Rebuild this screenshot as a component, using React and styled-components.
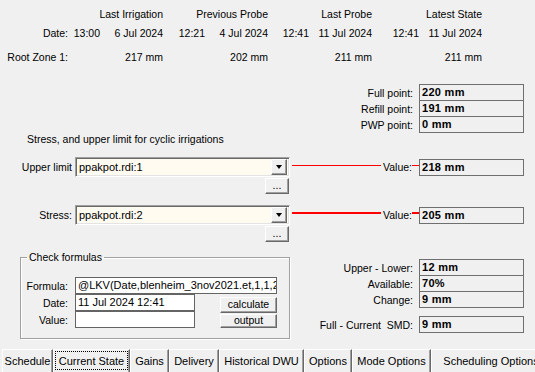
import styled, { createGlobalStyle } from "styled-components";

const GlobalStyle = createGlobalStyle`
  html, body { margin: 0; padding: 0; background: #f0f0f0; }
  body { font-family: "Liberation Sans", Arial, sans-serif; font-size: 10.5px; color: #000; }
`;

const Window = styled.div`
  width: 535px;
  height: 372px;
  overflow: hidden;
  background: #f0f0f0;
  display: flex;
  flex-direction: column;
  font-family: "Liberation Sans", Arial, sans-serif;
  font-size: 10.5px;
  color: #000;
`;

const StatusGrid = styled.div`
  display: grid;
  grid-template-columns: 68px 95px 105px 104px 110px;
  grid-template-rows: 19px 24px 13px;
  margin-top: 8px;
  line-height: 13px;
  white-space: nowrap;
`;

const Cell = styled.div`
  text-align: right;
`;

const DateCell = styled.div`
  display: flex;
  justify-content: flex-end;
`;

const DatePart = styled.span`
  width: 63px;
  text-align: right;
`;

const PointList = styled.div`
  display: flex;
  flex-direction: column;
  align-items: flex-end;
  padding-right: 11px;
  margin-top: ${(p) => p.$top || 0}px;
`;

const PointRow = styled.div`
  display: flex;
  align-items: center;
  gap: 6px;
  margin-top: ${(p) => p.$gap ?? -1}px;
  &:first-child { margin-top: 0; }
`;

const ValueBox = styled.div`
  width: 105px;
  height: 17px;
  box-sizing: border-box;
  border: 1px solid #6f6f6f;
  font-weight: bold;
  font-size: 11px;
  letter-spacing: 0.3px;
  line-height: 15px;
  padding-left: 2px;
  white-space: nowrap;
`;

const Heading = styled.div`
  margin: -1px 0 0 27px;
  line-height: 14px;
`;

const LimitRow = styled.div`
  display: flex;
  align-items: center;
  height: 20px;
  margin-top: 11px;
`;

const RowLabel = styled.div`
  width: 72px;
  padding-right: 3px;
  text-align: right;
  white-space: nowrap;
`;

const Combo = styled.div`
  width: 215px;
  height: 20px;
  box-sizing: border-box;
  display: flex;
  align-items: center;
  background: #fffbf0;
  border-top: 1px solid #a0a0a0;
  border-left: 1px solid #a0a0a0;
  border-bottom: 1px solid #fff;
  border-right: 1px solid #fff;
  box-shadow: inset 1px 1px 0 #696969, inset -1px -1px 0 #e3e3e3;
  padding: 1px 2px 1px 1px;
`;

const ComboText = styled.span`
  flex: 1;
  padding-left: 2px;
  font-size: 11px;
  line-height: 16px;
`;

const ComboArrow = styled.div`
  width: 16px;
  height: 16px;
  box-sizing: border-box;
  background: #f0f0f0;
  border: 1px solid;
  border-color: #fff #696969 #696969 #fff;
  box-shadow: inset -1px -1px 0 #a0a0a0;
  display: flex;
  align-items: center;
  justify-content: center;
  &::before {
    content: "";
    border-left: 3.5px solid transparent;
    border-right: 3.5px solid transparent;
    border-top: 4px solid #000;
  }
`;

const WireArea = styled.div`
  flex: 1;
  align-self: stretch;
  display: flex;
  align-items: center;
  padding-right: 11px;
`;

const Wire = styled.div`
  height: ${(p) => p.$weight}px;
  align-self: flex-start;
  margin-top: ${(p) => (p.$weight > 1 ? 7 : 8)}px;
  background: #ff0000;
  flex: ${(p) => (p.$short ? "0 0 7px" : "1")};
  margin-left: ${(p) => (p.$short ? 0 : 2)}px;
`;

const WireLabel = styled.span`
  margin-left: 2px;
`;

const BrowseRow = styled.div`
  display: flex;
  padding-left: 265px;
  margin-top: 1px;
`;

const Button = styled.div`
  width: ${(p) => p.$w}px;
  height: ${(p) => p.$h || 16}px;
  box-sizing: border-box;
  background: #f0f0f0;
  border: 1px solid;
  border-color: #fff #696969 #696969 #fff;
  box-shadow: inset -1px -1px 0 #a0a0a0;
  text-align: center;
  line-height: ${(p) => (p.$h || 16) - 3}px;
  white-space: nowrap;
`;

const Bottom = styled.div`
  display: flex;
  align-items: flex-start;
  margin-top: 9px;
`;

const Group = styled.fieldset`
  margin: 0 0 0 20px;
  width: 270px;
  box-sizing: border-box;
  padding: 14px 0 10px 0;
  border: 1px solid #a0a0a0;
  box-shadow: inset 1px 1px 0 #fff, 1px 1px 0 #fff;
  min-width: 0;
`;

const Legend = styled.legend`
  margin-left: 6px;
  padding: 0 2px;
  line-height: 12px;
`;

const FormRow = styled.div`
  display: flex;
  align-items: center;
  height: 17px;
`;

const FormLabel = styled.span`
  width: 47px;
  margin-right: 7px;
  text-align: right;
`;

const Field = styled.div`
  width: ${(p) => p.$w}px;
  height: 17px;
  box-sizing: border-box;
  border: 1px solid #646464;
  background: #fff;
  padding-left: 2px;
  line-height: 15px;
  font-size: 11px;
  overflow: hidden;
  white-space: nowrap;
`;

const SubForm = styled.div`
  display: flex;
`;

const ButtonColumn = styled.div`
  display: flex;
  flex-direction: column;
  gap: 1px;
  margin-left: 25px;
  padding-top: 3px;
`;

const RightColumn = styled(PointList)`
  flex: 1;
  padding-top: 8px;
`;

const TabStrip = styled.div`
  margin-top: auto;
  height: 23px;
  display: flex;
  padding-left: 2px;
  font-size: 11px;
`;

const Tab = styled.div`
  width: ${(p) => p.$w}px;
  flex: none;
  height: 23px;
  box-sizing: border-box;
  border-top: 1px solid #fff;
  border-left: 1px solid #fff;
  border-right: 1px solid #696969;
  box-shadow: inset -1px 0 0 #a0a0a0;
  padding-top: 5px;
  line-height: 13px;
  text-align: center;
  white-space: nowrap;
  overflow: hidden;
  outline: ${(p) => (p.$active ? "1px dotted #000" : "none")};
  outline-offset: -3px;
`;

const tabs = [
  ["Schedule", 51],
  ["Current State", 77],
  ["Gains", 39],
  ["Delivery", 50],
  ["Historical DWU", 85],
  ["Options", 48],
  ["Mode Options", 79],
  ["Scheduling Options", 120],
];

const LimitBlock = ({ label, source, value, weight = 1 }) => (
  <>
    <LimitRow>
      <RowLabel>{label}</RowLabel>
      <Combo>
        <ComboText>{source}</ComboText>
        <ComboArrow />
      </Combo>
      <WireArea>
        <Wire $weight={weight} />
        <WireLabel>Value:</WireLabel>
        <Wire $short $weight={weight} />
        <ValueBox>{value}</ValueBox>
      </WireArea>
    </LimitRow>
    <BrowseRow>
      <Button $w={24}>...</Button>
    </BrowseRow>
  </>
);

export default function App() {
  return (
    <>
      <GlobalStyle />
      <Window>
        <StatusGrid>
          <Cell />
          <Cell>Last Irrigation</Cell>
          <Cell>Previous Probe</Cell>
          <Cell>Last Probe</Cell>
          <Cell>Latest State</Cell>

          <Cell>Date:</Cell>
          <DateCell><span>13:00</span><DatePart>6 Jul 2024</DatePart></DateCell>
          <DateCell><span>12:21</span><DatePart>4 Jul 2024</DatePart></DateCell>
          <DateCell><span>12:41</span><DatePart>11 Jul 2024</DatePart></DateCell>
          <DateCell><span>12:41</span><DatePart>11 Jul 2024</DatePart></DateCell>

          <Cell>Root Zone 1:</Cell>
          <Cell>217 mm</Cell>
          <Cell>202 mm</Cell>
          <Cell>211 mm</Cell>
          <Cell>211 mm</Cell>
        </StatusGrid>

        <PointList $top={20}>
          <PointRow><span>Full point:</span><ValueBox>220 mm</ValueBox></PointRow>
          <PointRow><span>Refill point:</span><ValueBox>191 mm</ValueBox></PointRow>
          <PointRow><span>PWP point:</span><ValueBox>0 mm</ValueBox></PointRow>
        </PointList>

        <Heading>Stress, and upper limit for cyclic irrigations</Heading>

        <LimitBlock label="Upper limit" source="ppakpot.rdi:1" value="218 mm" />
        <LimitBlock label="Stress:" source="ppakpot.rdi:2" value="205 mm" weight={2} />

        <Bottom>
          <Group>
            <Legend>Check formulas</Legend>
            <FormRow>
              <FormLabel>Formula:</FormLabel>
              <Field $w={202}>@LKV(Date,blenheim_3nov2021.et,1,1,2)</Field>
            </FormRow>
            <SubForm>
              <div>
                <FormRow>
                  <FormLabel>Date:</FormLabel>
                  <Field $w={120}>11 Jul 2024 12:41</Field>
                </FormRow>
                <FormRow>
                  <FormLabel>Value:</FormLabel>
                  <Field $w={120} />
                </FormRow>
              </div>
              <ButtonColumn>
                <Button $w={57}>calculate</Button>
                <Button $w={57} $h={14}>output</Button>
              </ButtonColumn>
            </SubForm>
          </Group>

          <RightColumn>
            <PointRow><span>Upper - Lower:</span><ValueBox>12 mm</ValueBox></PointRow>
            <PointRow><span>Available:</span><ValueBox>70%</ValueBox></PointRow>
            <PointRow><span>Change:</span><ValueBox>9 mm</ValueBox></PointRow>
            <PointRow $gap={8}><span>Full - Current&nbsp; SMD:</span><ValueBox>9 mm</ValueBox></PointRow>
          </RightColumn>
        </Bottom>

        <TabStrip>
          {tabs.map(([name, w]) => (
            <Tab key={name} $w={w} $active={name === "Current State"}>{name}</Tab>
          ))}
        </TabStrip>
      </Window>
    </>
  );
}
